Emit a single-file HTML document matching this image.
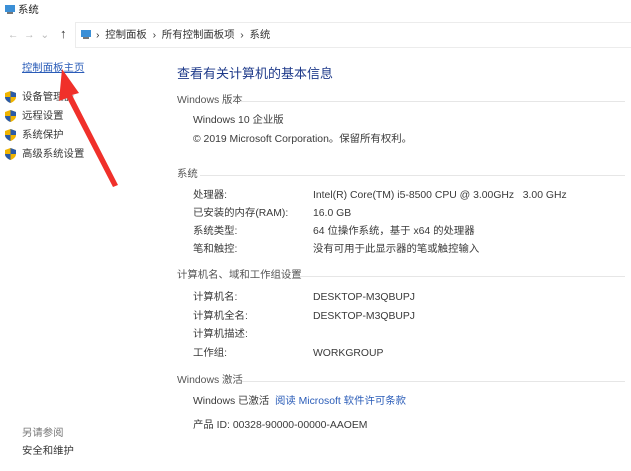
<!DOCTYPE html><html><head><meta charset="utf-8"><style>
body{margin:0;width:631px;height:471px;background:#fff;font-family:"Liberation Sans","Noto Sans CJK SC",sans-serif;font-size:10.4px;line-height:13px;color:#3a3a3a;position:relative;overflow:hidden}
.a{position:absolute;white-space:nowrap}
.hd{color:#555}
.ln{position:absolute;height:1px;background:#e6e6e6}
.sh{position:absolute;left:5px;width:11px;height:12px}
</style></head><body>
<svg class="a" style="left:4px;top:3px" width="12" height="12"><rect x="1" y="2" width="10" height="7" fill="#3b8fd6"/><rect x="3" y="9" width="6" height="2" fill="#777"/></svg>
<div class="a" style="left:18px;top:4px;color:#222">系统</div>
<div class="a" style="left:8px;top:29px;color:#bbb">←&nbsp;&nbsp;→&nbsp;&nbsp;⌄</div>
<div class="a" style="left:60px;top:27px;color:#333;font-size:13px">↑</div>
<div style="position:absolute;left:75px;top:22px;width:560px;height:24px;border:1px solid #ececec;border-right:none"></div>
<svg class="a" style="left:80px;top:28px" width="12" height="12"><rect x="1" y="2" width="10" height="7" fill="#3b8fd6"/><rect x="3" y="9" width="6" height="2" fill="#777"/></svg>
<div class="a" style="left:96px;top:29px;color:#333">›&nbsp; 控制面板 &nbsp;›&nbsp; 所有控制面板项 &nbsp;›&nbsp; 系统</div>
<div class="a" style="left:22px;top:62px;color:#2a5cb8;text-decoration:underline">控制面板主页</div>
<svg class="sh" style="top:91px"><path d="M5.5 0L11 2V6C11 9 8 11 5.5 12 3 11 0 9 0 6V2Z" fill="#f0b400"/><path d="M5.5 0L11 2V6H5.5ZM0 6H5.5V12C3 11 0 9 0 6Z" fill="#2a5aa8"/></svg>
<svg class="sh" style="top:110px"><path d="M5.5 0L11 2V6C11 9 8 11 5.5 12 3 11 0 9 0 6V2Z" fill="#f0b400"/><path d="M5.5 0L11 2V6H5.5ZM0 6H5.5V12C3 11 0 9 0 6Z" fill="#2a5aa8"/></svg>
<svg class="sh" style="top:129px"><path d="M5.5 0L11 2V6C11 9 8 11 5.5 12 3 11 0 9 0 6V2Z" fill="#f0b400"/><path d="M5.5 0L11 2V6H5.5ZM0 6H5.5V12C3 11 0 9 0 6Z" fill="#2a5aa8"/></svg>
<svg class="sh" style="top:148px"><path d="M5.5 0L11 2V6C11 9 8 11 5.5 12 3 11 0 9 0 6V2Z" fill="#f0b400"/><path d="M5.5 0L11 2V6H5.5ZM0 6H5.5V12C3 11 0 9 0 6Z" fill="#2a5aa8"/></svg>
<div class="a" style="left:22px;top:91px">设备管理器</div>
<div class="a" style="left:22px;top:110px">远程设置</div>
<div class="a" style="left:22px;top:129px">系统保护</div>
<div class="a" style="left:22px;top:148px">高级系统设置</div>
<div class="a" style="left:22px;top:427px;color:#777">另请参阅</div>
<div class="a" style="left:22px;top:445px">安全和维护</div>
<div class="a" style="left:177px;top:66px;font-size:13px;line-height:16px;color:#1e3a8a">查看有关计算机的基本信息</div>
<div class="a hd" style="left:177px;top:94px">Windows 版本</div><div class="ln" style="left:240px;top:101px;width:385px"></div>
<div class="a" style="left:193px;top:114px">Windows 10 企业版</div>
<div class="a" style="left:193px;top:133px">© 2019 Microsoft Corporation。保留所有权利。</div>
<div class="a hd" style="left:177px;top:168px">系统</div><div class="ln" style="left:200px;top:175px;width:425px"></div>
<div class="a" style="left:193px;top:189px">处理器:</div><div class="a" style="left:313px;top:189px">Intel(R) Core(TM) i5-8500 CPU @ 3.00GHz &nbsp; 3.00 GHz</div>
<div class="a" style="left:193px;top:207px">已安装的内存(RAM):</div><div class="a" style="left:313px;top:207px">16.0 GB</div>
<div class="a" style="left:193px;top:225px">系统类型:</div><div class="a" style="left:313px;top:225px">64 位操作系统，基于 x64 的处理器</div>
<div class="a" style="left:193px;top:243px">笔和触控:</div><div class="a" style="left:313px;top:243px">没有可用于此显示器的笔或触控输入</div>
<div class="a hd" style="left:177px;top:269px">计算机名、域和工作组设置</div><div class="ln" style="left:295px;top:276px;width:330px"></div>
<div class="a" style="left:193px;top:291px">计算机名:</div><div class="a" style="left:313px;top:291px">DESKTOP-M3QBUPJ</div>
<div class="a" style="left:193px;top:310px">计算机全名:</div><div class="a" style="left:313px;top:310px">DESKTOP-M3QBUPJ</div>
<div class="a" style="left:193px;top:328px">计算机描述:</div>
<div class="a" style="left:193px;top:347px">工作组:</div><div class="a" style="left:313px;top:347px">WORKGROUP</div>
<div class="a hd" style="left:177px;top:374px">Windows 激活</div><div class="ln" style="left:242px;top:381px;width:383px"></div>
<div class="a" style="left:193px;top:395px">Windows 已激活 &nbsp;<span style="color:#2a5cb8">阅读 Microsoft 软件许可条款</span></div>
<div class="a" style="left:193px;top:419px">产品 ID: 00328-90000-00000-AAOEM</div>
<svg class="a" style="left:0;top:0" width="631" height="471"><polygon points="62,69 79,93 72,95 118,185 113,187 67,98 59,101" fill="#f0302a"/></svg>
</body></html>
